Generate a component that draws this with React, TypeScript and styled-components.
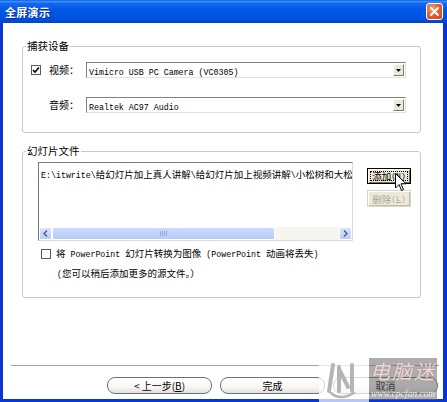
import React from "react";
import styled, { createGlobalStyle } from "styled-components";

const Global = createGlobalStyle`
  *, *::before, *::after { box-sizing: border-box; }
  html, body { margin: 0; padding: 0; background: #fff; }
  body {
    width: 447px; height: 402px; overflow: hidden;
    font-family: "Noto Sans CJK SC", "Liberation Sans", sans-serif;
    color: #000;
  }
`;

const Window = styled.div`
  position: relative;
  width: 447px;
  height: 402px;
  display: flex;
  flex-direction: column;
  background: #0831d9;
`;

const TitleBar = styled.div`
  height: 23px;
  flex: none;
  display: flex;
  align-items: center;
  justify-content: space-between;
  padding: 0 4px 0 5px;
  background: linear-gradient(
    to bottom,
    #0a5ee6 0%,
    #3d8ff7 7%,
    #1468ef 15%,
    #0057e6 45%,
    #0052e0 80%,
    #0044cc 100%
  );
`;

const Title = styled.span`
  color: #fff;
  font-size: 11px;
  font-weight: 700;
  line-height: 14px;
  letter-spacing: 0.3px;
  text-shadow: 1px 1px 0 #0a2a8c;
`;

const CloseButton = styled.div`
  width: 17px;
  height: 17px;
  border: 1px solid #fff;
  border-radius: 3px;
  background: radial-gradient(circle at 35% 30%, #f4a07e 0%, #e2633a 45%, #c94419 100%);
  display: flex;
  align-items: center;
  justify-content: center;
`;

const Frame = styled.div`
  flex: 1;
  display: flex;
  flex-direction: column;
  background: #fff;
  border-style: solid;
  border-color: #0a35d6;
  border-width: 0 4px 3px 3px;
`;

const Group = styled.div<{ $top: number; $height: number }>`
  position: relative;
  margin: ${(p) => p.$top}px 22px 0 19px;
  height: ${(p) => p.$height}px;
  border: 1px solid #cbc9bd;
  border-radius: 3px;
`;

const Legend = styled.span`
  position: absolute;
  top: -7px;
  left: 3px;
  padding: 0 1px;
  background: #fff;
  font-size: 10.5px;
  line-height: 12px;
`;

const DeviceBody = styled.div`
  display: flex;
  flex-direction: column;
  gap: 19px;
  padding: 15px 0 0 8px;
`;

const DeviceRow = styled.div`
  display: flex;
  align-items: center;
  height: 16px;
`;

const CheckCell = styled.div`
  width: 18px;
  display: flex;
  align-items: center;
`;

const CheckBox = styled.div`
  width: 10px;
  height: 10px;
  border: 1px solid #5a5a5a;
  background: #fff;
  display: flex;
  align-items: center;
  justify-content: center;
  flex: none;
`;

const FieldLabel = styled.span`
  width: 37px;
  font-size: 10px;
  line-height: 12px;
`;

const Combo = styled.div`
  width: 320px;
  height: 16px;
  display: flex;
  align-items: center;
  padding-left: 2px;
  background: #fff;
  border-style: solid;
  border-width: 1px;
  border-color: #808080 #e4e2da #e4e2da #808080;
`;

const Mono = styled.span<{ $size?: number }>`
  font-family: "Liberation Mono", monospace;
  font-size: ${(p) => p.$size ?? 8.3}px;
`;

const ComboText = styled.span`
  flex: 1;
  white-space: nowrap;
  overflow: hidden;
  line-height: 12px;
`;

const DropButton = styled.div`
  width: 11px;
  height: 12px;
  margin-right: 1px;
  background: #ece9d8;
  border-style: solid;
  border-width: 1px;
  border-color: #fff #7b7b7b #7b7b7b #fff;
  display: flex;
  align-items: center;
  justify-content: center;
`;

const FilesBody = styled.div`
  display: flex;
  flex-direction: column;
  padding: 10px 0 0 15px;
`;

const FilesTop = styled.div`
  display: flex;
  align-items: flex-start;
`;

const ListBox = styled.div`
  width: 315px;
  height: 79px;
  display: flex;
  flex-direction: column;
  background: #fff;
  border-style: solid;
  border-width: 1px;
  border-color: #7a7a7a #dedbd0 #dedbd0 #7a7a7a;
`;

const ListText = styled.div`
  flex: 1;
  padding: 5px 0 0 2px;
  font-size: 9.5px;
  line-height: 12px;
  white-space: nowrap;
  overflow: hidden;
`;

const HScroll = styled.div`
  height: 13px;
  display: flex;
  background: #f6f5f0;
`;

const ScrollArrow = styled.div`
  width: 13px;
  height: 13px;
  background: linear-gradient(to bottom, #d8e4fd, #b8cdfa);
  border: 1px solid #fff;
  border-radius: 2px;
  display: flex;
  align-items: center;
  justify-content: center;
`;

const Thumb = styled.div`
  width: 223px;
  height: 13px;
  background: linear-gradient(to bottom, #cbdafd, #b4cbf8);
  border: 1px solid #fff;
  border-radius: 2px;
  display: flex;
  align-items: center;
  justify-content: center;
  gap: 1px;
`;

const Grip = styled.span`
  width: 1px;
  height: 5px;
  background: #8faae6;
`;

const Track = styled.div`
  flex: 1;
`;

const SideButtons = styled.div`
  display: flex;
  flex-direction: column;
  gap: 6px;
  margin-left: 14px;
  padding-top: 6px;
`;

const SideButton = styled.div<{ $focused?: boolean; $disabled?: boolean }>`
  width: 44px;
  height: ${(p) => (p.$focused ? 16 : 17)}px;
  display: flex;
  align-items: center;
  justify-content: center;
  font-size: 9.5px;
  line-height: 12px;
  color: ${(p) => (p.$disabled ? "#aca899" : "#000")};
  background: #ece9d8;
  border: 1px solid ${(p) => (p.$focused ? "#000" : "#d8d5c8")};
  box-shadow: ${(p) =>
    p.$focused
      ? "inset 1px 1px 0 #fff, inset -1px -1px 0 #716f64"
      : "inset 1px 1px 0 #fff, inset -1px -1px 0 #c2bfb2"};
  outline: ${(p) => (p.$focused ? "1px dotted #000" : "none")};
  outline-offset: -4px;
  white-space: nowrap;
`;

const OptionRow = styled.div`
  display: flex;
  align-items: center;
  gap: 5px;
  margin: 7px 0 0 3px;
  height: 12px;
`;

const OptionText = styled.span`
  font-size: 9.5px;
  line-height: 12px;
  white-space: nowrap;
`;

const NoteText = styled.span`
  margin: 7px 0 0 19px;
  font-size: 9.5px;
  line-height: 12px;
  white-space: nowrap;
`;

const Footer = styled.div`
  margin-top: auto;
  display: flex;
  flex-direction: column;
`;

const Separator = styled.div`
  height: 1px;
  margin: 0 4px 0 8px;
  background: #a7a6a0;
`;

const ButtonBar = styled.div`
  display: flex;
  justify-content: flex-end;
  gap: 8px;
  padding: 11px 5px 5px 0;
`;

const PushButton = styled.div`
  width: 105px;
  height: 17px;
  display: flex;
  align-items: center;
  justify-content: center;
  border: 1px solid #707070;
  border-radius: 8px;
  background: linear-gradient(to bottom, #ffffff 0%, #f7f7f5 60%, #e2e1dc 100%);
  font-size: 10px;
  line-height: 12px;
`;

const Underline = styled.span`
  text-decoration: underline;
`;

const Cursor = styled.svg`
  position: absolute;
  left: 395px;
  top: 173px;
`;

const Watermark = styled.div`
  position: absolute;
  left: 319px;
  top: 358px;
  width: 118px;
  height: 44px;
  display: flex;
`;

const WatermarkLogo = styled.div`
  width: 50px;
  height: 44px;
  background: rgba(255, 255, 255, 0.72);
  display: flex;
  align-items: center;
  justify-content: center;
`;

const WatermarkName = styled.div`
  width: 68px;
  height: 42px;
  background: rgba(105, 105, 105, 0.55);
  display: flex;
  flex-direction: column;
  align-items: center;
  justify-content: space-between;
  padding: 1px 0 1px;
`;

const WatermarkTitle = styled.span`
  font-size: 20px;
  line-height: 24px;
  font-style: italic;
  letter-spacing: 2px;
  color: rgba(255, 255, 255, 0.75);
  text-shadow: 0 0 1px rgba(170, 60, 60, 0.6);
`;

const WatermarkUrl = styled.span`
  font-family: "Liberation Serif", serif;
  font-size: 9.5px;
  line-height: 10px;
  font-style: italic;
  color: rgba(255, 255, 255, 0.85);
`;

const CheckMark = () => (
  <svg width="8" height="8" viewBox="0 0 8 8">
    <path d="M1 4 L3 6 L7 1.5" fill="none" stroke="#000" strokeWidth="1.6" />
  </svg>
);

const DownTriangle = () => (
  <svg width="5" height="3" viewBox="0 0 5 3">
    <path d="M0 0 H5 L2.5 3 Z" fill="#000" />
  </svg>
);

export default function App() {
  return (
    <>
      <Global />
      <Window>
        <TitleBar>
          <Title>全屏演示</Title>
          <CloseButton>
            <svg width="9" height="9" viewBox="0 0 9 9">
              <path d="M1 1 L8 8 M8 1 L1 8" stroke="#fff" strokeWidth="1.8" strokeLinecap="round" />
            </svg>
          </CloseButton>
        </TitleBar>
        <Frame>
          <Group $top={23} $height={87}>
            <Legend>捕获设备</Legend>
            <DeviceBody>
              <DeviceRow>
                <CheckCell>
                  <CheckBox>
                    <CheckMark />
                  </CheckBox>
                </CheckCell>
                <FieldLabel>视频：</FieldLabel>
                <Combo>
                  <ComboText>
                    <Mono>Vimicro USB PC Camera (VC0305)</Mono>
                  </ComboText>
                  <DropButton>
                    <DownTriangle />
                  </DropButton>
                </Combo>
              </DeviceRow>
              <DeviceRow>
                <CheckCell />
                <FieldLabel>音频：</FieldLabel>
                <Combo>
                  <ComboText>
                    <Mono>Realtek AC97 Audio</Mono>
                  </ComboText>
                  <DropButton>
                    <DownTriangle />
                  </DropButton>
                </Combo>
              </DeviceRow>
            </DeviceBody>
          </Group>

          <Group $top={18} $height={147}>
            <Legend>幻灯片文件</Legend>
            <FilesBody>
              <FilesTop>
                <ListBox>
                  <ListText>
                    <Mono>{"E:\\itwrite\\"}</Mono>给幻灯片加上真人讲解<Mono>{"\\"}</Mono>给幻灯片加上视频讲解<Mono>{"\\"}</Mono>小松树和大松树
                  </ListText>
                  <HScroll>
                    <ScrollArrow>
                      <svg width="5" height="7" viewBox="0 0 5 7">
                        <path d="M4 0.5 L1 3.5 L4 6.5" fill="none" stroke="#4d6185" strokeWidth="1.5" />
                      </svg>
                    </ScrollArrow>
                    <Thumb>
                      <Grip />
                      <Grip />
                      <Grip />
                      <Grip />
                    </Thumb>
                    <Track />
                    <ScrollArrow>
                      <svg width="5" height="7" viewBox="0 0 5 7">
                        <path d="M1 0.5 L4 3.5 L1 6.5" fill="none" stroke="#4d6185" strokeWidth="1.5" />
                      </svg>
                    </ScrollArrow>
                  </HScroll>
                </ListBox>
                <SideButtons>
                  <SideButton $focused>
                    添加<Mono $size={8}>(<Underline>N</Underline>)</Mono>
                  </SideButton>
                  <SideButton $disabled>
                    删除<Mono $size={8}>(<Underline>L</Underline>)</Mono>
                  </SideButton>
                </SideButtons>
              </FilesTop>
              <OptionRow>
                <CheckBox />
                <OptionText>
                  将<Mono> PowerPoint </Mono>幻灯片转换为图像<Mono> (PowerPoint </Mono>动画将丢失<Mono>)</Mono>
                </OptionText>
              </OptionRow>
              <NoteText>
                <Mono>(</Mono>您可以稍后添加更多的源文件。）
              </NoteText>
            </FilesBody>
          </Group>

          <Footer>
            <Separator />
            <ButtonBar>
              <PushButton>
                &lt; 上一步(<Underline>B</Underline>)
              </PushButton>
              <PushButton>完成</PushButton>
              <PushButton>取消</PushButton>
            </ButtonBar>
          </Footer>
        </Frame>

        <Cursor width="12" height="19" viewBox="0 0 12 19">
          <path
            d="M0.5 0.5 L0.5 15 L4 11.5 L6.5 17.5 L8.5 16.6 L6 10.8 L11 10.8 Z"
            fill="#fff"
            stroke="#000"
            strokeWidth="1"
            strokeLinejoin="round"
          />
        </Cursor>

        <Watermark>
          <WatermarkLogo>
            <svg width="40" height="38" viewBox="0 0 40 38">
              <g fill="none" stroke="#b5b5b5" strokeWidth="4" strokeLinecap="round">
                <path d="M9 4 L5 30" />
                <path d="M15 6 L15 30" />
                <path d="M15 8 L24 26" />
                <path d="M28 4 L28 30" />
                <path d="M7 32 Q16 40 30 32" strokeWidth="2.5" />
              </g>
            </svg>
          </WatermarkLogo>
          <WatermarkName>
            <WatermarkTitle>电脑迷</WatermarkTitle>
            <WatermarkUrl>www.cpcfan.com</WatermarkUrl>
          </WatermarkName>
        </Watermark>
      </Window>
    </>
  );
}
